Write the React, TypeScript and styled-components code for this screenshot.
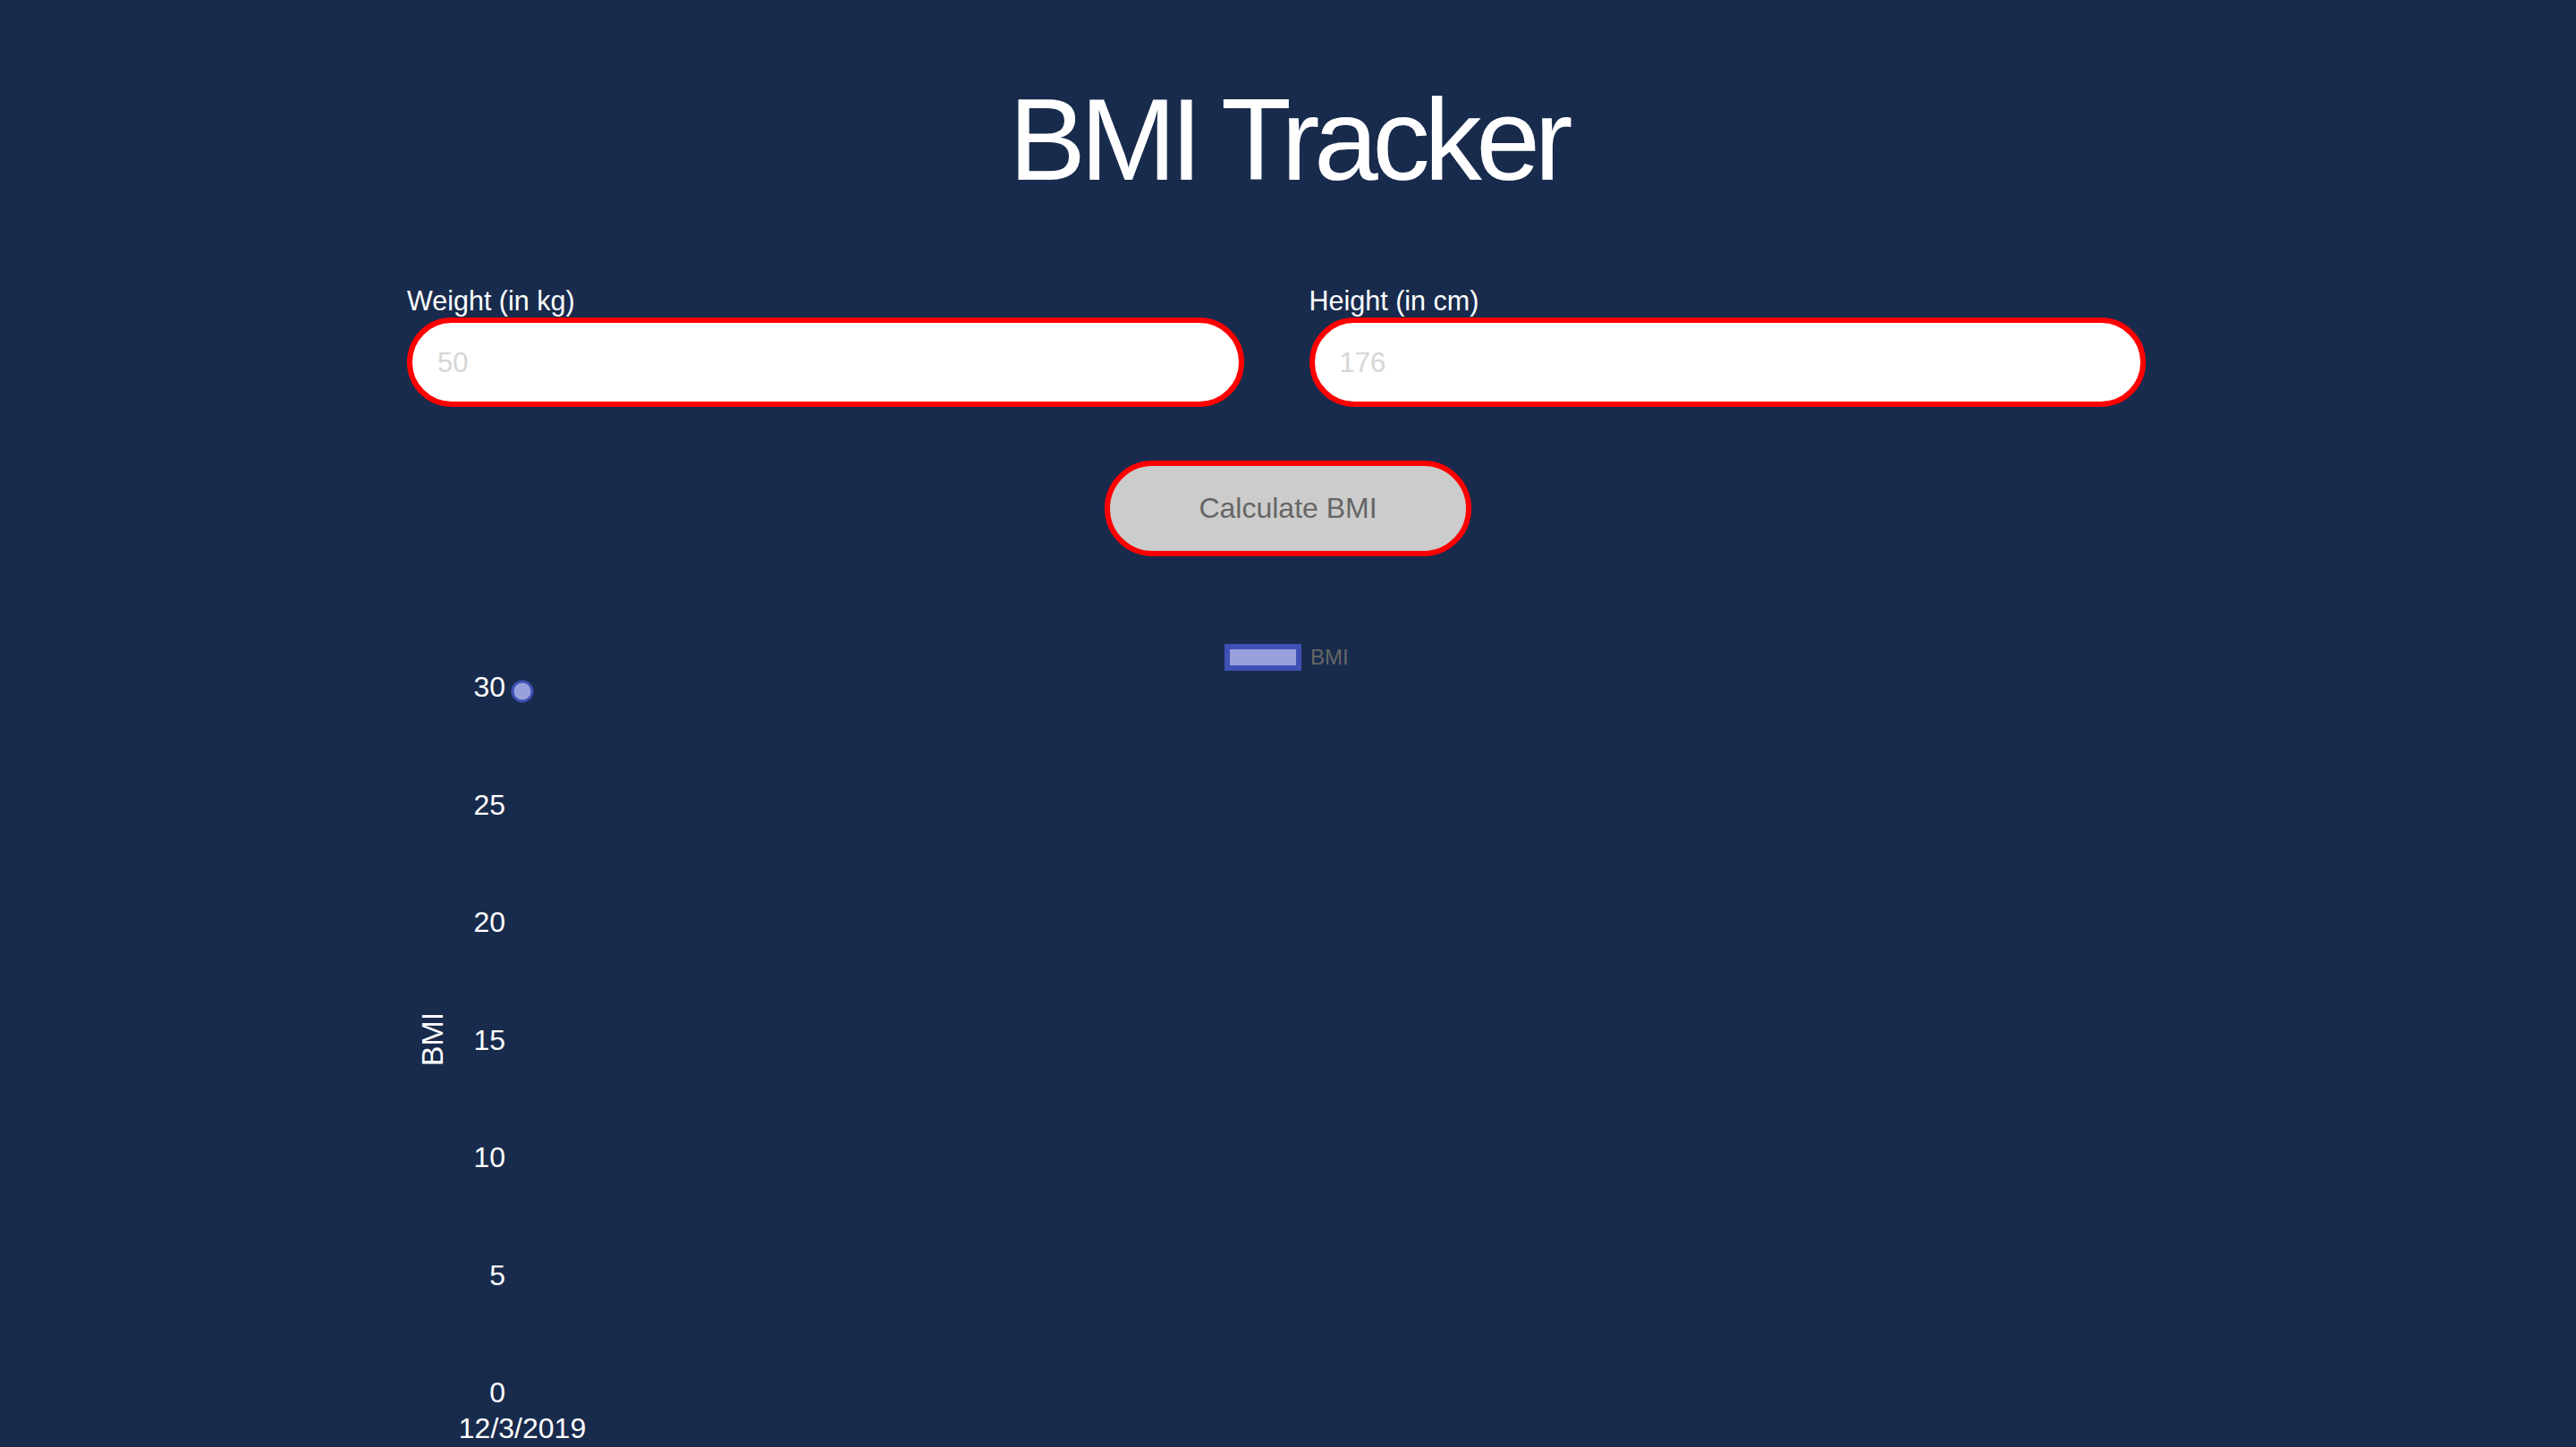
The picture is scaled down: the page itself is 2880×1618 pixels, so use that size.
import React from "react";
import styled, { createGlobalStyle } from "styled-components";

const GlobalStyle = createGlobalStyle`
  html, body {
    margin: 0;
    padding: 0;
    background: #182b4d;
  }
  body {
    font-family: "Liberation Sans", Arial, Helvetica, sans-serif;
    color: #ffffff;
  }
  * { box-sizing: border-box; }
`;

const Page = styled.main`
  min-height: 1618px;
  background: #182b4d;
  padding-top: 92px;
  display: flex;
  flex-direction: column;
`;

const Title = styled.h1`
  margin: 0 0 98px 0;
  font-size: 129px;
  line-height: 1;
  font-weight: 400;
  letter-spacing: -6.5px;
  text-align: center;
  color: #ffffff;
`;

const FormRow = styled.div`
  display: flex;
  gap: 73px;
  width: 1944px;
  margin-left: 455px;
`;

const Field = styled.div`
  flex: 1 1 0;
  display: flex;
  flex-direction: column;
`;

const Label = styled.label`
  display: block;
  font-size: 30.5px;
  line-height: 34px;
  margin-bottom: 2px;
  color: #ffffff;
`;

const Input = styled.input`
  width: 100%;
  height: 100px;
  border: 6px solid #ff0000;
  border-radius: 50px;
  background: #ffffff;
  padding: 2px 28px 0;
  font-family: "Liberation Sans", Arial, sans-serif;
  font-size: 31px;
  color: #333;
  outline: none;
  &::placeholder {
    color: #d6d6d6;
  }
`;

const ButtonRow = styled.div`
  display: flex;
  justify-content: center;
  margin-top: 60px;
`;

const Button = styled.button`
  width: 410px;
  height: 107px;
  border: 6px solid #ff0000;
  border-radius: 54px;
  background: #cccccc;
  color: #666666;
  font-family: "Liberation Sans", Arial, sans-serif;
  font-size: 32px;
  cursor: pointer;
`;

const ChartWrap = styled.section`
  margin-top: 59px;
  margin-left: 455px;
  width: 1944px;
`;

const ChartSvg = styled.svg`
  display: block;
  font-family: "Liberation Sans", Arial, Helvetica, sans-serif;
`;

const ticks = [30, 25, 20, 15, 10, 5, 0];
const yTop = 87;
const yBottom = 876;
const yFor = (v: number) => yBottom - ((yBottom - yTop) * v) / 30;

function Chart() {
  return (
    <ChartSvg width={1944} height={940} viewBox="0 0 1944 940">
      <rect x={917} y={42} width={80} height={24} fill="#98a1dc" stroke="#3f51b5" strokeWidth={6} />
      <text x={1010} y={62} fontSize={24} fill="#666666">BMI</text>
      {ticks.map((t) => (
        <text
          key={t}
          x={110}
          y={yFor(t)}
          fontSize={32}
          fill="#ffffff"
          textAnchor="end"
          dominantBaseline="central"
        >
          {t}
        </text>
      ))}
      <text
        x={28}
        y={481}
        fontSize={34}
        fill="#ffffff"
        textAnchor="middle"
        dominantBaseline="central"
        transform="rotate(-90 28 481)"
      >
        BMI
      </text>
      <circle cx={129} cy={92} r={11} fill="#98a1dc" stroke="#3f51b5" strokeWidth={3} />
      <text x={129} y={927} fontSize={32} fill="#ffffff" textAnchor="middle">
        12/3/2019
      </text>
    </ChartSvg>
  );
}

export default function App() {
  return (
    <>
      <GlobalStyle />
      <Page>
        <Title>BMI Tracker</Title>
        <FormRow>
          <Field>
            <Label htmlFor="weight">Weight (in kg)</Label>
            <Input id="weight" type="number" placeholder="50" />
          </Field>
          <Field>
            <Label htmlFor="height">Height (in cm)</Label>
            <Input id="height" type="number" placeholder="176" />
          </Field>
        </FormRow>
        <ButtonRow>
          <Button type="button">Calculate BMI</Button>
        </ButtonRow>
        <ChartWrap>
          <Chart />
        </ChartWrap>
      </Page>
    </>
  );
}
